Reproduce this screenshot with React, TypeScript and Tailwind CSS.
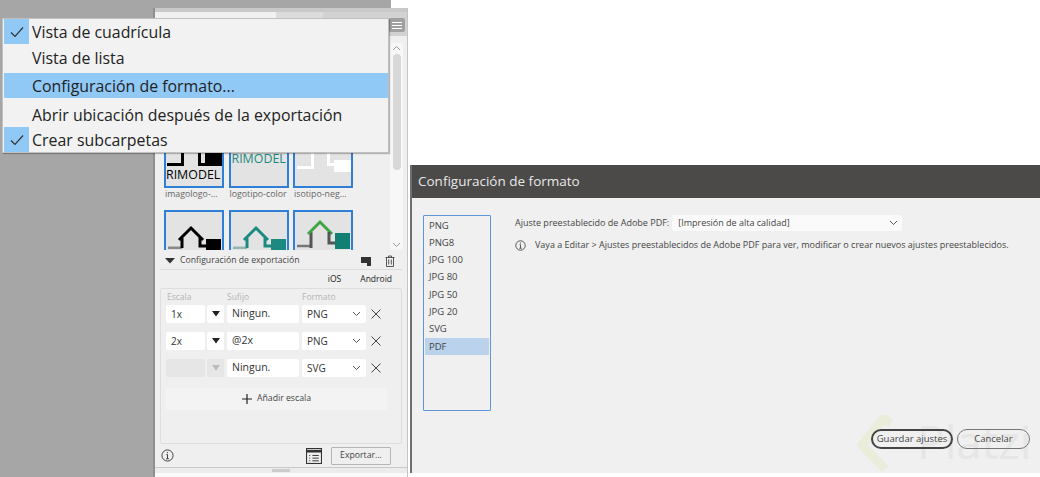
import React from "react";

const sans = "font-['Open_Sans','Noto_Sans',sans-serif]";

function Check() {
  return (
    <svg width="16" height="16" viewBox="0 0 16 16" fill="none" stroke="#333" strokeWidth="1.2">
      <path d="M2 8.5 L6 12.5 L14 3.5" />
    </svg>
  );
}

function MenuRow({ label, checked, active }: { label: string; checked?: boolean; active?: boolean }) {
  return (
    <div className={`flex h-[25px] items-center ${active ? "bg-[#90c8f6]" : ""}`}>
      <div className={`flex h-[25px] w-[25px] items-center justify-center ${checked ? "bg-[#90c8f6]" : ""}`}>
        {checked ? <Check /> : null}
      </div>
      <span className="ml-[3px] whitespace-nowrap pt-px text-[15.9px] leading-[25px] text-[#222]">{label}</span>
    </div>
  );
}

function Arrow({ color = "#222", w = 8 }: { color?: string; w?: number }) {
  return (
    <svg width={w} height="6" viewBox="0 0 8 6" preserveAspectRatio="none">
      <path d="M0 0 H8 L4 5.5 Z" fill={color} />
    </svg>
  );
}

function Chevron() {
  return (
    <svg width="9" height="6" viewBox="0 0 9 6" fill="none" stroke="#555" strokeWidth="1">
      <path d="M1 1 L4.5 4.5 L8 1" />
    </svg>
  );
}

function Cross() {
  return (
    <svg width="10" height="10" viewBox="0 0 10 10" fill="none" stroke="#444" strokeWidth="1">
      <path d="M0.5 0.5 L9.5 9.5 M9.5 0.5 L0.5 9.5" />
    </svg>
  );
}

function InfoIcon({ size = 13 }: { size?: number }) {
  return (
    <svg width={size} height={size} viewBox="0 0 14 14" fill="none" stroke="#333" strokeWidth="1">
      <circle cx="7" cy="7" r="6" />
      <path d="M7 6 V10.5 M5.5 10.5 H8.5 M5.8 6 H7" />
      <circle cx="7" cy="3.8" r="0.7" fill="#333" stroke="none" />
    </svg>
  );
}

function Row({ scale, suffix, format, disabled }: { scale: string; suffix: string; format: string; disabled?: boolean }) {
  return (
    <div className="flex h-[18px] items-center">
      <div className={`flex h-[18px] w-[39px] items-center rounded-[2px] pl-[5px] text-[10px] ${disabled ? "bg-[#e6e6e6]" : "bg-white"}`}>{scale}</div>
      <div className={`ml-[2px] flex h-[18px] w-[17px] items-center justify-center rounded-[2px] ${disabled ? "bg-[#e6e6e6]" : "bg-white"}`}>
        <Arrow color={disabled ? "#bbb" : "#222"} />
      </div>
      <div className="ml-[3px] flex h-[18px] w-[72px] items-center rounded-[2px] bg-white pl-[5px] text-[10.5px]">{suffix}</div>
      <div className="ml-[3px] flex h-[18px] w-[64px] items-center justify-between rounded-[2px] bg-white pl-[5px] pr-[5px] text-[10px]">
        <span>{format}</span>
        <Chevron />
      </div>
      <div className="ml-[5px]"><Cross /></div>
    </div>
  );
}

function Thumb({ children, label }: { children: React.ReactNode; label: string }) {
  return (
    <div className="w-[60px] shrink-0">
      <div className="h-[60px] w-[60px] overflow-hidden border-2 border-[#2f7fd6] bg-[#e3e3e3]">{children}</div>
      {label ? <div className="h-[12px] whitespace-nowrap pl-[1px] text-[8.8px] leading-[12px] text-[#666]">{label}</div> : null}
    </div>
  );
}

function House({ roof, body, square, ground, y = 0 }: { roof: string; body: string; square: string; ground: string; y?: number }) {
  return (
    <svg width="56" height="56" viewBox="0 0 56 56" fill="none">
      <path d={`M2 ${34 + y * 0.3} H16`} stroke={ground} strokeWidth="2.5" />
      <path d={`M16 ${20 + y} V36`} stroke={body} strokeWidth="3" />
      <path d={`M13 ${22 + y} L25 ${10 + y} L37 ${22 + y}`} stroke={roof} strokeWidth="3" />
      <path d={`M34 ${20 + y} V${31 + y * 0.5} H41`} stroke={body} strokeWidth="3" />
      <rect x="40" y={21 + y} width="15" height="16" fill={square} />
    </svg>
  );
}

function ImagoBlack() {
  return (
    <div className="relative h-full w-full">
      <div className="absolute left-[1px] top-[20px] h-[16px] w-[17px] border-b-[3px] border-r-[3px] border-black" />
      <div className="absolute left-[32px] top-[20px] h-[16px] w-[7px] border-b-[3px] border-l-[3px] border-black" />
      <div className="absolute left-[39px] top-[20px] h-[16px] w-[17px] bg-black" />
      <div className="absolute left-[0px] top-[37px] text-[12.4px] font-medium leading-[15px] text-black">RIMODEL</div>
    </div>
  );
}

function ColorLogo() {
  return (
    <div className="whitespace-nowrap pl-[1px] pt-[21px] text-[12.4px] leading-[15px] text-[#1c8a80]">RIMODEL</div>
  );
}

function WhiteIso() {
  return (
    <div className="relative h-full w-full">
      <div className="absolute left-[2px] top-[20px] h-[19px] w-[17px] border-b-[3px] border-r-[3px] border-white" />
      <div className="absolute left-[32px] top-[20px] h-[16px] w-[8px] border-b-[3px] border-l-[3px] border-white" />
      <div className="absolute left-[39px] top-[30px] h-[12px] w-[17px] bg-white" />
    </div>
  );
}

export default function App() {
  return (
    <div className={`relative flex h-[477px] w-[1040px] overflow-hidden bg-white ${sans}`}>
      <div className="h-[477px] w-[391px] shrink-0 bg-[#a6a6a6]" />

      <div className="absolute bottom-0 left-[153px] top-[8px] flex w-[255px] flex-col border-l-2 border-r border-l-[#8f8f8f] border-r-[#c4c4c4] bg-[#efefef]">
        <div className="flex h-[28px] shrink-0 flex-col bg-[#c9c9c9] pt-[4px]">
          <div className="flex h-[24px] bg-[#d2d2d2]">
            <div className="h-[24px] w-[121px] bg-[#f1f1f1]" />
            <div className="h-[24px] w-[47px] bg-[#dcdcdc]" />
            <div className="ml-auto mr-[2px] mt-[6px] flex h-[14px] w-[16px] flex-col items-center justify-center gap-[2px] rounded-[2px] bg-[#a0a0a0]">
              <div className="h-px w-[10px] bg-white" />
              <div className="h-px w-[10px] bg-white" />
              <div className="h-px w-[10px] bg-white" />
            </div>
          </div>
        </div>
        <div className="flex h-[214px] shrink-0 pl-[9px] pr-[4px]">
          <div className="flex w-[190px] flex-col overflow-hidden pt-[92px]">
            <div className="flex gap-[4.5px]">
              <Thumb label="imagologo-..."><ImagoBlack /></Thumb>
              <Thumb label="logotipo-color"><ColorLogo /></Thumb>
              <Thumb label="isotipo-neg..."><WhiteIso /></Thumb>
            </div>
            <div className="mt-[10px] flex gap-[4.5px]">
              <Thumb label=""><House roof="#000" body="#000" square="#000" ground="#888" y={6} /></Thumb>
              <Thumb label=""><House roof="#1c8a80" body="#1c8a80" square="#1c8a80" ground="#8fb8b4" y={6} /></Thumb>
              <Thumb label=""><House roof="#3fa648" body="#555" square="#117f72" ground="#777" /></Thumb>
            </div>
          </div>
          <div className="ml-auto mt-[7px] flex w-[13px] flex-col items-center rounded-[2px] bg-[#f7f7f7] pt-[2px]">
            <svg width="9" height="6" viewBox="0 0 9 6" fill="none" stroke="#999"><path d="M1 5 L4.5 1.5 L8 5" /></svg>
            <div className="mt-[3px] h-[116px] w-[8px] rounded-[4px] bg-[#d8d8d8]" />
            <div className="mt-auto pb-[2px]"><svg width="9" height="6" viewBox="0 0 9 6" fill="none" stroke="#999"><path d="M1 1 L4.5 4.5 L8 1" /></svg></div>
          </div>
        </div>

        <div className="ml-[5px] mr-[5px] flex h-[20px] shrink-0 items-center border-b border-[#dcdcdc] pl-[5px] pt-[2px] text-[8.7px] text-[#444]">
          <Arrow color="#333" w={10} />
          <span className="ml-[5px]">Configuración de exportación</span>
          <div className="ml-auto flex items-center gap-[14px] pr-[7px] text-[#444]">
            <svg width="10" height="10" viewBox="0 0 10 10"><path d="M0 1 H10 V10 H6 V7 H0 Z" fill="#333" /></svg>
            <svg width="10" height="12" viewBox="0 0 10 12" fill="none" stroke="#444" strokeWidth="0.9"><path d="M0.5 2.5 H9.5 M3.5 2.5 V1 H6.5 V2.5 M1.5 2.5 V11.5 H8.5 V2.5 M3.7 4.5 V9.5 M6.3 4.5 V9.5" /></svg>
          </div>
        </div>
        <div className="flex h-[18px] shrink-0 items-center justify-end gap-[19px] pr-[15px] pt-px text-[8.5px] text-[#222]">
          <span>iOS</span>
          <span>Android</span>
        </div>
        <div className="ml-[5px] mr-[5px] flex h-[156px] shrink-0 flex-col rounded-[2px] border border-[#dedede] px-[5px] text-[#333]">
          <div className="flex h-[16px] items-center pl-px text-[8.5px] text-[#b5b5b5]">
            <span className="w-[60px]">Escala</span>
            <span className="w-[75px]">Sufijo</span>
            <span>Formato</span>
          </div>
          <div className="flex flex-col gap-[9px]">
            <Row scale="1x" suffix="Ningun." format="PNG" />
            <Row scale="2x" suffix="@2x" format="PNG" />
            <Row scale="" suffix="Ningun." format="SVG" disabled />
          </div>
          <div className="mt-[11px] flex h-[22px] w-[221px] items-center justify-center gap-[5px] bg-[#f3f3f3] text-[8.7px] text-[#444]">
            <svg width="10" height="10" viewBox="0 0 10 10" fill="none" stroke="#222" strokeWidth="1.2"><path d="M5 0 V10 M0 5 H10" /></svg>
            <span>Añadir escala</span>
          </div>
        </div>
        <div className="ml-[5px] mr-[5px] flex h-[23px] shrink-0 items-center pl-[1px] pr-[11px] text-[8.7px]">
          <InfoIcon />
          <svg className="ml-auto" width="16" height="16" viewBox="0 0 15 15" fill="none" stroke="#333">
            <rect x="0.5" y="0.5" width="14" height="14" />
            <path d="M0 3 H15" strokeWidth="2.5" />
            <path d="M3 7 H4 M6 7 H12 M3 9.5 H4 M6 9.5 H12 M3 12 H4 M6 12 H12" strokeWidth="0.9" />
          </svg>
          <div className="ml-[9px] flex h-[18px] w-[60px] items-center justify-center rounded-[1px] border border-[#b5b5b5] text-[#444]">Exportar...</div>
        </div>
        <div className="flex h-[6px] shrink-0 items-center justify-center border-t border-[#c9c9c9] bg-[#ececec]">
          <div className="h-[3px] w-[18px] bg-[#cccccc]" />
        </div>
        <div className="flex-1 bg-[#fafafa]" />
      </div>

      <div className="absolute left-[2px] top-[18px] z-10 w-[387px] border border-[#c0c0c0] bg-[#f2f2f2] pl-[1px] shadow-[1px_1px_1px_rgba(0,0,0,0.25)]">
        <MenuRow label="Vista de cuadrícula" checked />
        <div className="mt-[1px]"><MenuRow label="Vista de lista" /></div>
        <div className="mt-[3px]"><MenuRow label="Configuración de formato..." active /></div>
        <div className="mt-[4px]"><MenuRow label="Abrir ubicación después de la exportación" /></div>
        <MenuRow label="Crear subcarpetas" checked />
      </div>

      <div className="absolute bottom-[4px] left-[410px] right-0 top-[165px] flex flex-col border-l-2 border-[#6e6e6e] bg-[#f0f0f0] text-[#444]">
        <div className="flex h-[33px] shrink-0 items-center bg-[#4b4a48] pl-[6px] text-[13.5px] text-[#e8e8e8]">Configuración de formato</div>
        <div className="flex min-h-0 flex-1 pl-[11px] pt-[17px]">
          <div className="h-[196px] w-[68px] shrink-0 rounded-[1px] border border-[#5b97d9] px-px pt-[1px] text-[9.5px]">
            {["PNG", "PNG8", "JPG 100", "JPG 80", "JPG 50", "JPG 20", "SVG", "PDF"].map((f) => (
              <div key={f} className={`flex h-[17.3px] items-center pl-[4px] ${f === "PDF" ? "bg-[#bbd2ec]" : ""}`}>{f}</div>
            ))}
          </div>
          <div className="ml-[24px] flex flex-col">
            <div className="flex h-[16px] items-center text-[9px]">
              <span>Ajuste preestablecido de Adobe PDF:</span>
              <div className="ml-[3px] flex h-[16px] w-[230px] items-center justify-between rounded-[2px] bg-[#fafafa] pl-[6px] pr-[4px]">
                <span>[Impresión de alta calidad]</span>
                <Chevron />
              </div>
            </div>
            <div className="mt-[6px] flex h-[16px] items-center text-[9px]">
              <InfoIcon size={11} />
              <span className="ml-[9px] whitespace-nowrap">Vaya a Editar &gt; Ajustes preestablecidos de Adobe PDF para ver, modificar o crear nuevos ajustes preestablecidos.</span>
            </div>
          </div>
        </div>
        <svg className="absolute left-[445px] top-[250px]" width="50" height="58" viewBox="0 0 50 58" fill="none" stroke="#e9edda" strokeWidth="9">
          <path d="M34 8 L26 4 L5 30 L28 54" />
        </svg>
        <span className="absolute left-[505px] top-[253px] text-[46px] leading-[46px] text-[#e6e6e6]">Platzi</span>
        <div className="absolute bottom-[24px] right-[10px] flex gap-[4px] text-[9.5px]">
          <div className="flex h-[20px] w-[82px] items-center justify-center rounded-full border-2 border-[#444]">Guardar ajustes</div>
          <div className="flex h-[20px] w-[73px] items-center justify-center rounded-full border border-[#777]">Cancelar</div>
        </div>
      </div>
    </div>
  );
}
